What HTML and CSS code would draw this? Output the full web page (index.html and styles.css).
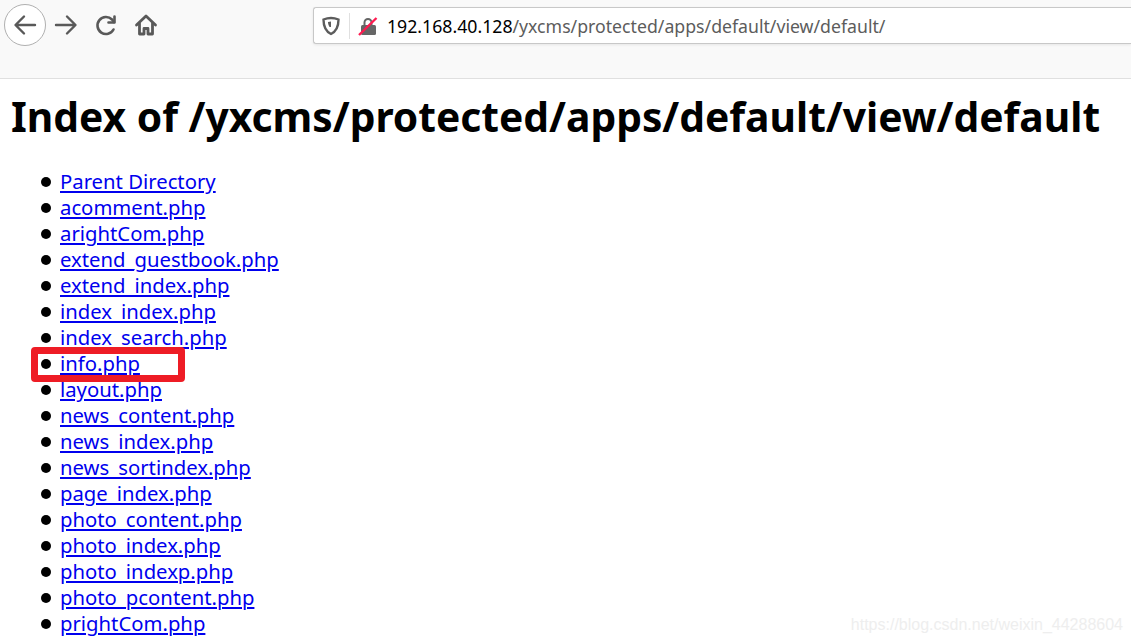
FILE: index.html
```html
<!DOCTYPE html>
<html lang="zh">
<head>
    <meta charset="UTF-8">
    <meta name="viewport" content="width=device-width, initial-scale=1.0">
    <title>Index of /yxcms/protected/apps/default/view/default</title>
    <link rel="stylesheet" href="styles.css">
</head>
<body>
    <div class="toolbar">
        <div class="nav-buttons">
            <span class="back-btn">
                <svg width="24" height="24" viewBox="0 0 24 24" fill="none" stroke="#595959" stroke-width="2.4" stroke-linecap="round" stroke-linejoin="round"><path d="M22 12H3M11 3.500L2.500 12l8.500 8.500"/></svg>
            </span>
            <span class="nav-icon">
                <svg width="24" height="24" viewBox="0 0 24 24" fill="none" stroke="#595959" stroke-width="2.400" stroke-linecap="round" stroke-linejoin="round"><path d="M2 12h19M13 3.500l8.500 8.500-8.500 8.500"/></svg>
            </span>
            <span class="nav-icon">
                <svg width="24" height="24" viewBox="0 0 24 24" fill="none" stroke="#595959" stroke-width="2.600" stroke-linecap="round" stroke-linejoin="round"><path d="M19.500 16.500A8.500 8.500 0 1 1 18 6.500L20 9"/><path d="M20.500 3.500V9.500H14.500"/></svg>
            </span>
            <span class="nav-icon">
                <svg width="24" height="24" viewBox="0 0 24 24" fill="none" stroke="#595959" stroke-width="2.800" stroke-linejoin="round" stroke-linecap="round"><path d="M2.500 12L12 3l9.500 9"/><path d="M5.500 10.500V21h4.500v-5.500h4V21h4.500V10.500"/></svg>
            </span>
        </div>
        <div class="url-bar">
            <span class="shield">
                <svg width="18" height="20" viewBox="0 0 18 20"><path d="M9 2c2.500 0 5 .5 7.500 1.500 0 7-1.500 11.500-7.500 14.500C3 15 1.500 10.500 1.500 3.500 4 2.500 6.500 2 9 2z" fill="none" stroke="#5c5c5c" stroke-width="2.400"/><path d="M9 5.500c-1 0-2 .2-3 .5 0 1.500.5 3.500 1.500 5H9z" fill="#5c5c5c"/></svg>
            </span>
            <span class="url-sep"></span>
            <span class="lock">
                <svg width="20" height="20" viewBox="0 0 20 20"><path d="M6.500 9V6.500a3.500 3.500 0 0 1 7 0V9" fill="none" stroke="#666" stroke-width="2"/><rect x="3" y="9" width="15" height="10" rx="1.500" fill="#666"/><path d="M1 19L18.500 2" stroke="#ff1a50" stroke-width="2.400"/></svg>
            </span>
            <span class="url-text"><b>192.168.40.128</b>/yxcms/protected/apps/default/view/default/</span>
        </div>
    </div>

    <div class="content">
        <h1>Index of /yxcms/protected/apps/default/view/default</h1>
        <ul>
            <li><a href="#">Parent Directory</a></li>
            <li><a href="#">acomment.php</a></li>
            <li><a href="#">arightCom.php</a></li>
            <li><a href="#">extend_guestbook.php</a></li>
            <li><a href="#">extend_index.php</a></li>
            <li><a href="#">index_index.php</a></li>
            <li><a href="#">index_search.php</a></li>
            <li><a href="#">info.php</a><span class="red-box"></span></li>
            <li><a href="#">layout.php</a></li>
            <li><a href="#">news_content.php</a></li>
            <li><a href="#">news_index.php</a></li>
            <li><a href="#">news_sortindex.php</a></li>
            <li><a href="#">page_index.php</a></li>
            <li><a href="#">photo_content.php</a></li>
            <li><a href="#">photo_index.php</a></li>
            <li><a href="#">photo_indexp.php</a></li>
            <li><a href="#">photo_pcontent.php</a></li>
            <li><a href="#">prightCom.php</a></li>
        </ul>
    </div>

    <div class="watermark">https://blog.csdn.net/weixin_44288604</div>
</body>
</html>
```

FILE: styles.css
```css
html, body {
    height: 100%;
    overflow: hidden;
}
body {
    margin: 0;
    background: #fff;
    color: #000;
    font-family: "Noto Sans", sans-serif;
}
.toolbar {
    display: flex;
    align-items: flex-start;
    height: 74px;
    background: #f9f9f9;
    border-bottom: 1px solid #e0e0e0;
    padding: 4px 0 0 4px;
}
.nav-buttons {
    display: flex;
    align-items: center;
    height: 42px;
}
.back-btn {
    display: flex;
    align-items: center;
    justify-content: center;
    width: 40px;
    height: 40px;
    border: 1px solid #b0b0b0;
    border-radius: 50%;
    background: #fff;
}
.nav-icon {
    display: flex;
    width: 24px;
    margin-left: 16px;
}
.nav-icon:nth-child(2) {
    margin-left: 8px;
}
.url-bar {
    display: flex;
    align-items: center;
    height: 35px;
    margin: 3px 0 0 155px;
    flex: 1;
    background: #fff;
    border: 1px solid #c8c8c8;
    border-right: 0;
    border-radius: 3px 0 0 3px;
    box-shadow: 0 1px 3px rgba(0, 0, 0, 0.08);
}
.shield {
    display: flex;
    margin-left: 8px;
}
.url-sep {
    width: 1px;
    height: 26px;
    background: #e0e0e0;
    margin: 0 8px 0 9px;
}
.lock {
    display: flex;
}
.url-text {
    margin-left: 9px;
    font-size: 17.700px;
    color: #5c5c5c;
    white-space: nowrap;
}
.url-text b {
    font-weight: normal;
    color: #000;
}
.content {
    padding: 0 11px;
}
h1 {
    margin: 9px 0 0;
    font-size: 40.750px;
    line-height: 56px;
    font-weight: bold;
    white-space: nowrap;
}
ul {
    margin: 24px 0 0;
    padding-left: 49px;
    font-size: 20.300px;
    line-height: 26px;
    list-style: none;
}
li {
    position: relative;
}
li::before {
    content: "";
    position: absolute;
    left: -19px;
    top: 9px;
    width: 10px;
    height: 10px;
    border-radius: 50%;
    background: #000;
}
a {
    color: #0000ee;
}
.red-box {
    position: absolute;
    left: -29px;
    top: -3px;
    width: 154px;
    height: 35px;
    box-sizing: border-box;
    border: 7px solid #ee1c25;
    border-radius: 4px;
}
.watermark {
    position: absolute;
    right: 8px;
    bottom: 9px;
    font-family: "Liberation Sans", sans-serif;
    font-size: 16px;
    color: #eeeeee;
}
```
